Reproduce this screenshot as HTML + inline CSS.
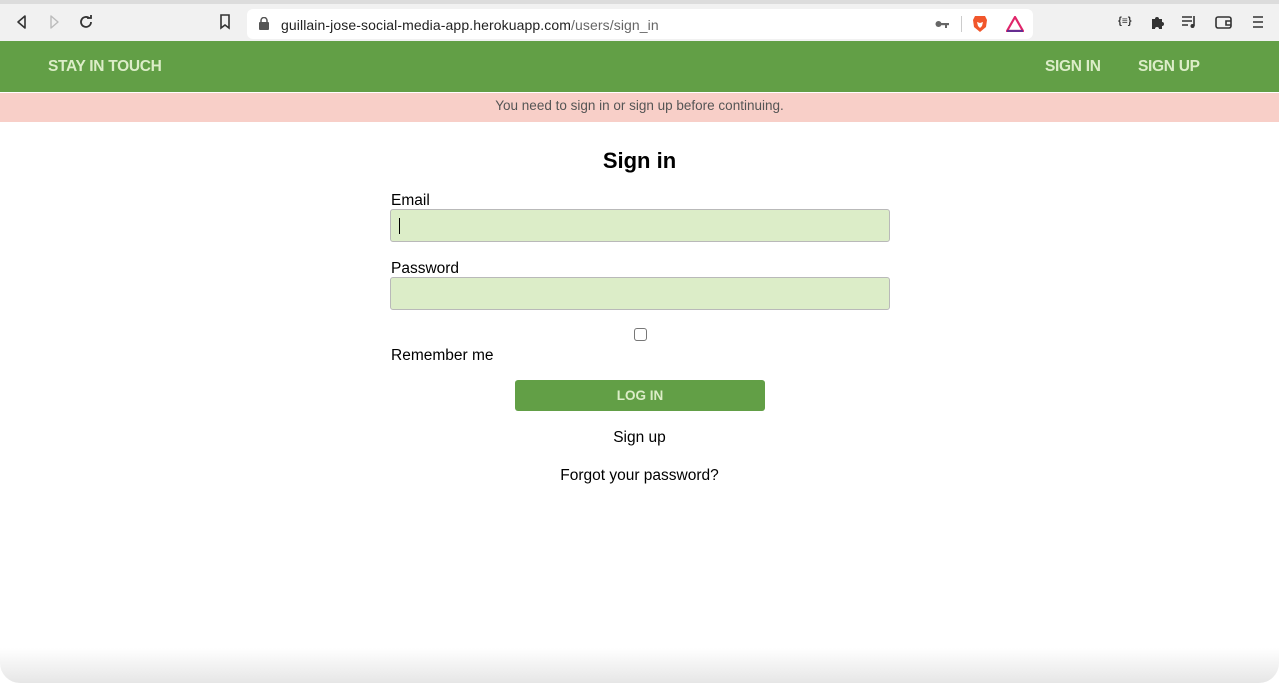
<!DOCTYPE html>
<html><head><meta charset="utf-8"><style>
*{box-sizing:border-box;margin:0;padding:0}
body{width:1279px;height:683px;overflow:hidden;background:#fff;font-family:"Liberation Sans",Arial,sans-serif;position:relative}
.chrome{position:absolute;top:0;left:0;width:1279px;height:41px;background:#f1f1f1;border-top:4px solid #dcdcdc}
.url{position:absolute;left:247px;top:5px;width:786px;height:30px;background:#fff;border-radius:6px}
.url span{position:absolute;left:34px;top:8px;font-size:14px;color:#222;letter-spacing:0.1px}
.url span i{font-style:normal;color:#666}
.ic{position:absolute}
.nav{position:absolute;top:41px;left:0;width:1279px;height:51px;background:#629f46;color:#dcedc8;font-weight:bold;font-size:15.5px;letter-spacing:-0.3px}
.nav div{position:absolute;top:17px}
.flash{position:absolute;top:93px;left:0;width:1279px;height:29px;background:#f8cfc8;color:#555;font-size:13.5px;text-align:center;line-height:26px}
h1{position:absolute;top:148px;left:0;width:1279px;text-align:center;font-size:22px;font-weight:bold;color:#000}
.lbl{position:absolute;left:391px;font-size:15.5px;color:#000}
.inp{position:absolute;left:390px;width:500px;height:33px;background:#dcedc8;border:1px solid #b9b9b9;border-radius:3px}
.cb{position:absolute;left:634px;top:328px;width:13px;height:13px;border:1px solid #777;border-radius:3px;background:#fff}
.btn{position:absolute;left:515px;top:380px;width:250px;height:31px;background:#629f46;border-radius:3px;color:#dcedc8;font-weight:bold;font-size:13.5px;text-align:center;line-height:31px}
.lnk{position:absolute;left:0;width:1279px;text-align:center;font-size:15.5px;color:#000}
.shadow{position:absolute;left:0;bottom:0;width:1279px;height:35px;background:linear-gradient(#fff,#e6e6e6);border-radius:0 0 20px 20px}
</style></head><body>
<div class="chrome">
<svg class="ic" style="left:14px;top:10px" width="16" height="16" viewBox="0 0 16 16"><path d="M11 2L4 8l7 6z" fill="none" stroke="#333" stroke-width="1.6" stroke-linejoin="round"/></svg>
<svg class="ic" style="left:46px;top:10px" width="16" height="16" viewBox="0 0 16 16"><path d="M5 2l7 6-7 6z" fill="none" stroke="#bbb" stroke-width="1.4" stroke-linejoin="round"/></svg>
<svg class="ic" style="left:78px;top:10px" width="16" height="16" viewBox="0 0 16 16"><path d="M13 8a5 5 0 1 1-1.5-3.6" fill="none" stroke="#333" stroke-width="1.8"/><path d="M9 3h4V0" fill="none" stroke="#333" stroke-width="1.8" transform="translate(0,1)"/></svg>
<svg class="ic" style="left:219px;top:10px" width="12" height="16" viewBox="0 0 12 16"><path d="M2 1h8v13l-4-3-4 3z" fill="none" stroke="#333" stroke-width="1.6"/></svg>
<div class="url">
<svg class="ic" style="left:12px;top:8px" width="10" height="13" viewBox="0 0 10 13"><rect x="0" y="5" width="10" height="8" rx="1" fill="#555"/><path d="M2 6V3.5a3 3 0 0 1 6 0V6" fill="none" stroke="#555" stroke-width="1.5"/></svg>
<span>guillain-jose-social-media-app.herokuapp.com<i>/users/sign_in</i></span>
<svg class="ic" style="left:688px;top:10px" width="14" height="10" viewBox="0 0 14 10"><circle cx="3.5" cy="5" r="3" fill="#666"/><rect x="5" y="4" width="9" height="2.2" fill="#666"/><rect x="10" y="4" width="2" height="5" fill="#666"/></svg>
<div class="ic" style="left:714px;top:7px;width:1px;height:16px;background:#ccc"></div>
<svg class="ic" style="left:725px;top:6px" width="16" height="18" viewBox="0 0 16 18"><path d="M3 1h10l2 4-1 7-6 5-6-5-1-7z" fill="#f1562b"/><path d="M5 7l3 1 3-1-1 4-2 2-2-2z" fill="#fff"/></svg>
<svg class="ic" style="left:759px;top:7px" width="18" height="16" viewBox="0 0 18 16"><path d="M9 1l8 14H1z" fill="none" stroke="#e0266a" stroke-width="2.2" stroke-linejoin="round"/><path d="M1 15h16" stroke="#662d91" stroke-width="2.2"/></svg>
</div>
<div class="ic" style="left:1118px;top:12px;font-size:10px;font-weight:bold;color:#333">{≡}</div>
<svg class="ic" style="left:1150px;top:10px" width="16" height="16" viewBox="0 0 16 16"><path d="M2 5h3a2 2 0 1 1 4 0h3v3a2 2 0 1 1 0 4v3H9a2 2 0 1 0-4 0H2z" fill="#333"/></svg>
<svg class="ic" style="left:1181px;top:11px" width="16" height="14" viewBox="0 0 16 14"><path d="M1 2h10M1 6h10M1 10h6M13 1v10" stroke="#333" stroke-width="1.6" fill="none"/><circle cx="11.5" cy="11" r="2" fill="#333"/></svg>
<svg class="ic" style="left:1215px;top:11px" width="17" height="14" viewBox="0 0 17 14"><rect x="1" y="2" width="15" height="11" rx="2" fill="none" stroke="#333" stroke-width="1.6"/><path d="M16 6h-5v4h5" fill="none" stroke="#333" stroke-width="1.6"/></svg>
<svg class="ic" style="left:1252px;top:11px" width="12" height="14" viewBox="0 0 12 14"><path d="M1 2h10M1 7h10M1 12h10" stroke="#333" stroke-width="1.5"/></svg>
</div>
<div class="nav"><div style="left:48px">STAY IN TOUCH</div><div style="left:1045px">SIGN IN</div><div style="left:1138px">SIGN UP</div></div>
<div class="flash">You need to sign in or sign up before continuing.</div>
<h1>Sign in</h1>
<div class="lbl" style="top:192px">Email</div>
<div class="inp" style="top:209px"><div style="position:absolute;left:8px;top:8px;width:1px;height:16px;background:#000"></div></div>
<div class="lbl" style="top:260px">Password</div>
<div class="inp" style="top:277px"></div>
<div class="cb"></div>
<div class="lbl" style="top:347px">Remember me</div>
<div class="btn">LOG IN</div>
<div class="lnk" style="top:429px">Sign up</div>
<div class="lnk" style="top:467px">Forgot your password?</div>
<div class="shadow"></div>
</body></html>
